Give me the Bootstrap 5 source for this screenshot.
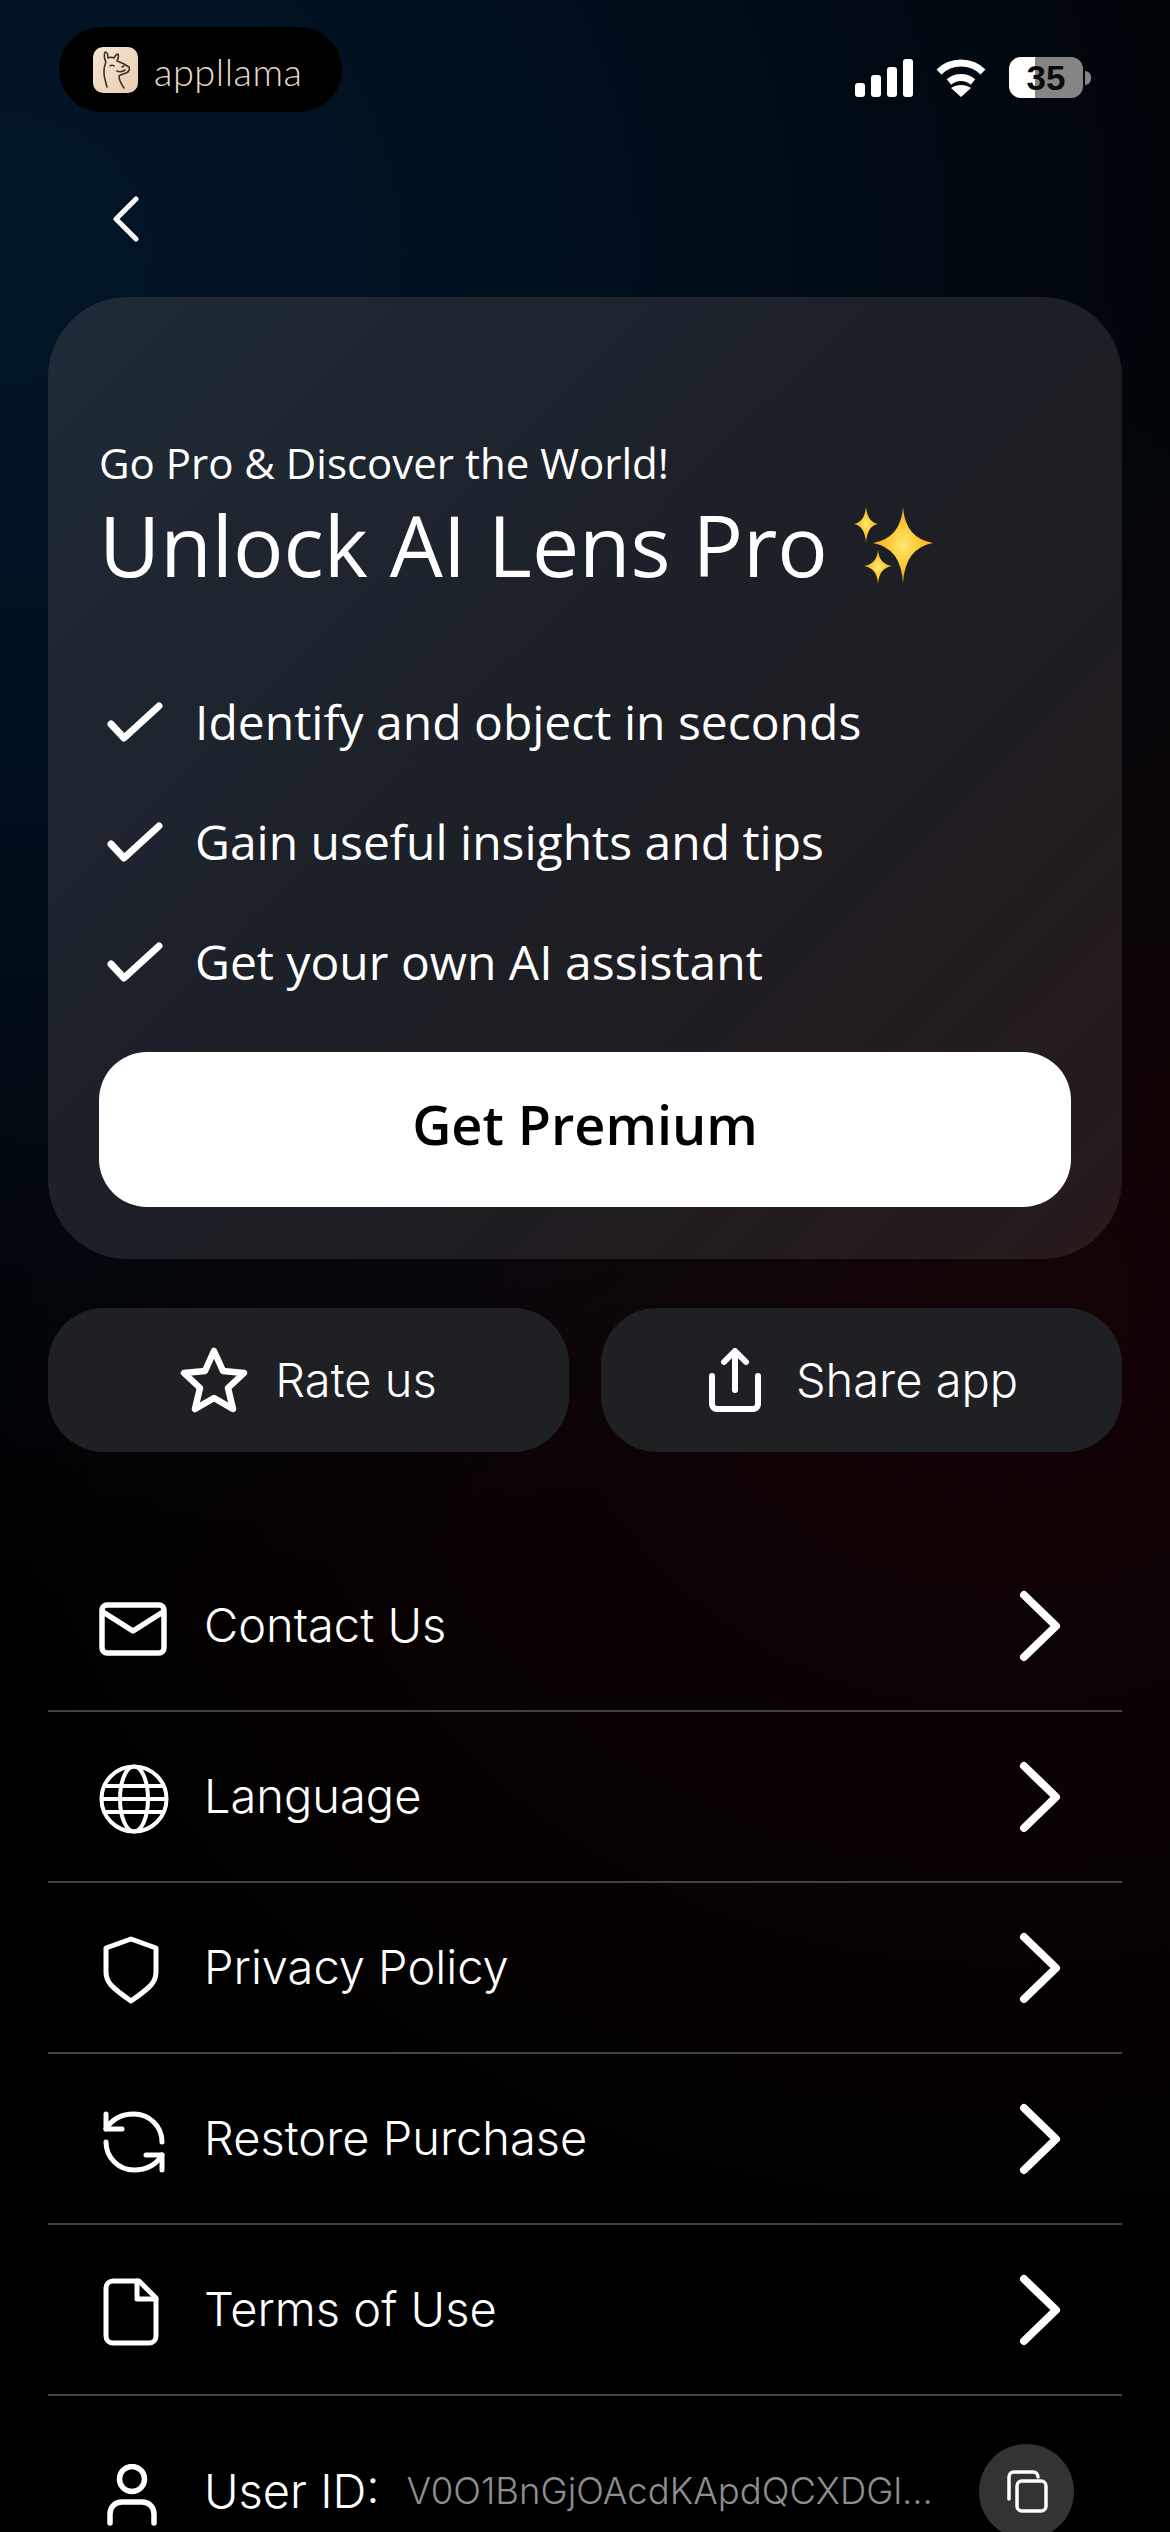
<!DOCTYPE html>
<html lang="en">
<head>
    <meta charset="UTF-8">
    <meta name="viewport" content="width=device-width, initial-scale=1.0">
    <title>Settings</title>
    <link href="https://cdn.jsdelivr.net/npm/bootstrap@5.3.0/dist/css/bootstrap.min.css" rel="stylesheet">
    <style>
        html, body {
            height: 2532px;
            overflow: hidden;
        }
        body {
            background-color: #000;
            background-image:
                radial-gradient(ellipse 1500px 1350px at 0 250px, #021629 0%, rgba(2,22,41,.7) 40%, rgba(2,22,41,0) 100%),
                radial-gradient(ellipse 1100px 1000px at 1000px 1300px, #140406 0%, rgba(20,4,6,.55) 50%, rgba(20,4,6,0) 100%);
            color: #fff;
            font-family: Inter, "Liberation Sans", sans-serif;
        }
        .status-row {
            height: 112px;
            margin-top: 27px;
            padding: 0 79px 0 59px;
        }
        .brand-pill {
            width: 283px;
            height: 85px;
            background: #000;
            border-radius: 43px;
            padding-left: 34px;
            gap: 16px;
        }
        .brand-icon {
            width: 45px;
            height: 46px;
            border-radius: 10px;
            background: linear-gradient(135deg, #f6e6d4, #e7cdb0);
            display: block;
        }
        .brand-name {
            font-family: Lato, sans-serif;
            font-weight: 300;
            font-size: 38px;
            letter-spacing: .5px;
            line-height: 46px;
            color: #ead9c6;
            margin-top: 2px;
        }
        .status-icons {
            gap: 23px;
            margin-top: 30px;
        }
        .battery-box {
            width: 74px;
            height: 41px;
            border-radius: 12px;
            overflow: hidden;
            background: linear-gradient(90deg, #fff 35%, #858585 35%);
            color: #0b0b0d;
            font-family: "Liberation Sans", sans-serif;
            font-weight: 700;
            font-size: 35px;
            line-height: 41px;
            text-align: center;
            margin-right: 8px;
        }
        .battery-wrap {
            position: relative;
        }
        .battery-tip {
            position: absolute;
            right: 0;
            top: 14px;
            width: 6px;
            height: 14px;
            background: #858585;
            border-radius: 0 7px 7px 0;
        }
        .back-row {
            padding-left: 111px;
            height: 158px;
            padding-top: 57px;
        }
        .pro-card {
            margin: 0 48px;
            height: 962px;
            border-radius: 80px;
            padding: 137px 51px 0;
            background: linear-gradient(135deg, #1f2b37 0%, #1c1f26 50%, #271a1b 100%);
        }
        .pro-sub {
            font-family: "Open Sans", sans-serif;
            font-size: 42px;
            line-height: 58px;
        }
        .pro-title {
            font-family: "Open Sans", sans-serif;
            font-weight: 400;
            font-size: 84px;
            line-height: 100px;
            margin: 3px 0 0;
            gap: 23px;
        }
        .pro-features {
            margin: 67px 0 0;
            padding: 0;
            list-style: none;
        }
        .pro-features li {
            height: 120px;
            font-family: "Open Sans", sans-serif;
            font-size: 48px;
            gap: 32px;
            padding-left: 8px;
        }
        .btn-premium {
            height: 155px;
            width: 100%;
            border-radius: 48px;
            background: #fff;
            color: #000;
            border: 0;
            padding: 0 0 10px;
            font-family: "Open Sans", sans-serif;
            font-weight: 600;
            font-size: 54px;
            margin-top: 30px;
        }
        .btn-premium:hover { background: #fff; color: #000; }
        .action-row {
            margin: 49px 48px 0;
            gap: 32px;
        }
        .btn-action {
            flex: none;
            width: calc(50% - 16px);
            height: 144px;
            border-radius: 56px;
            background: #1e2023;
            color: #fff;
            border: 0;
            font-size: 47px;
            font-weight: 350;
            gap: 27px;
        }
        .btn-action:hover { background: #1e2023; color: #fff; }
        .btn-share {
            gap: 35px;
            padding-left: 16px;
        }
        .menu-list {
            margin: 89px 48px 0;
        }
        .menu-list .list-group-item {
            background: transparent;
            color: #fff;
            border: 0;
            border-bottom: 2px solid #3f4347;
            border-radius: 0;
            height: 171px;
            padding: 0 61px 0 51px;
            font-size: 47px;
            font-weight: 350;
        }
        .menu-icon {
            width: 72px;
            margin-right: 33px;
            flex: none;
        }
        .menu-list .user-row {
            border-bottom: 0;
            padding-right: 48px;
            height: 190px;
        }
        .user-label {
            white-space: nowrap;
        }
        .user-value {
            font-size: 36.5px;
            color: #8e8e8e;
            margin-left: 27px;
            flex: 1 1 auto;
            white-space: nowrap;
        }
        .copy-btn {
            width: 95px;
            height: 95px;
            border-radius: 50%;
            background: #333;
            flex: none;
        }
    </style>
</head>
<body>

<!-- Status bar -->
<div class="status-row d-flex justify-content-between align-items-start">
    <div class="brand-pill d-flex align-items-center">
        <svg class="brand-icon" viewBox="0 0 45 46" fill="none" stroke="#3c3128" stroke-width="1.6" stroke-linecap="round" stroke-linejoin="round">
            <path d="M14 40c-1-5-3-8-3-14 0-5 1-9 2-11-2-3-2-8-1-10 2 0 3 3 3 6 2-1 4-1 6 0 1-2 3-4 4-4 1 2 0 5-1 7 3 1 5 2 7 3l5 3c1 2 0 5-3 6-3 1-6 2-7 3 0 5 3 9 5 12" />
            <path d="M17 19c1-1 3-1 4 0M29 20l2-1" />
            <path d="M24 24c2 1 5 1 8-1" />
        </svg>
        <span class="brand-name">appllama</span>
    </div>
    <div class="status-icons d-flex align-items-center">
        <svg width="58" height="38" viewBox="0 0 58 38" fill="#fff">
            <rect x="0" y="24" width="10" height="14" rx="3"/>
            <rect x="16" y="16" width="10" height="22" rx="3"/>
            <rect x="32" y="8" width="10" height="30" rx="3"/>
            <rect x="48" y="0" width="10" height="38" rx="3"/>
        </svg>
        <svg width="50" height="38" viewBox="0 0 50 38" fill="none" stroke="#fff" stroke-width="7">
            <path d="M3 13C15 1 35 1 47 13"/>
            <path d="M13 23c7-6 17-6 24 0"/>
            <path d="M25 38l-10-9c6-4 14-4 20 0z" fill="#fff" stroke="none"/>
        </svg>
        <div class="battery-wrap">
            <div class="battery-box">35</div>
            <div class="battery-tip"></div>
        </div>
    </div>
</div>

<!-- Back -->
<div class="back-row">
    <svg width="30" height="46" viewBox="0 0 30 46" fill="none" stroke="#fff" stroke-width="5" stroke-linecap="round" stroke-linejoin="round">
        <path d="M25 3 5 23l20 20"/>
    </svg>
</div>

<!-- Pro card -->
<div class="pro-card">
    <div class="pro-sub">Go Pro &amp; Discover the World!</div>
    <h1 class="pro-title d-flex align-items-center">Unlock AI Lens Pro
        <svg width="84" height="80" viewBox="0 0 84 80">
            <defs>
                <radialGradient id="spark">
                    <stop offset="0" stop-color="#ffe873"/>
                    <stop offset=".5" stop-color="#fdca35"/>
                    <stop offset="1" stop-color="#eea51c"/>
                </radialGradient>
            </defs>
            <g fill="url(#spark)">
                <path d="M52 2Q54 33 82 38Q54 43 52 78Q50 43 22 38Q50 33 52 2Z"/>
                <path d="M15 1Q16 17 27 19Q16 21 15 38Q14 21 3 19Q14 17 15 1Z"/>
                <path d="M27 45Q28 59 41 61Q28 63 27 79Q26 63 13 61Q26 59 27 45Z"/>
            </g>
        </svg>
    </h1>
    <ul class="pro-features">
        <li class="d-flex align-items-center">
            <svg width="56" height="40" viewBox="0 0 56 40" fill="none" stroke="#fff" stroke-width="7" stroke-linecap="round" stroke-linejoin="round"><path d="M4 22l13 14L52 4"/></svg>
            Identify and object in seconds
        </li>
        <li class="d-flex align-items-center">
            <svg width="56" height="40" viewBox="0 0 56 40" fill="none" stroke="#fff" stroke-width="7" stroke-linecap="round" stroke-linejoin="round"><path d="M4 22l13 14L52 4"/></svg>
            Gain useful insights and tips
        </li>
        <li class="d-flex align-items-center">
            <svg width="56" height="40" viewBox="0 0 56 40" fill="none" stroke="#fff" stroke-width="7" stroke-linecap="round" stroke-linejoin="round"><path d="M4 22l13 14L52 4"/></svg>
            Get your own AI assistant
        </li>
    </ul>
    <button class="btn btn-premium" type="button">Get Premium</button>
</div>

<!-- Rate / share -->
<div class="action-row d-flex">
    <button class="btn btn-action d-flex align-items-center justify-content-center" type="button">
        <svg width="68" height="66" viewBox="0 0 68 66" fill="none" stroke="#fff" stroke-width="6.5" stroke-linejoin="round"><path d="M34 4l9 20 21 2-16 15 5 21-19-11-19 11 5-21L4 26l21-2z"/></svg>
        Rate us
    </button>
    <button class="btn btn-action btn-share d-flex align-items-center justify-content-center" type="button">
        <svg width="52" height="64" viewBox="0 0 52 64" fill="none" stroke="#fff" stroke-width="6" stroke-linecap="round" stroke-linejoin="round"><path d="M26 42V4M15 14 26 3l11 11"/><path d="M3 28v28c0 3 2 5 5 5h36c3 0 5-2 5-5V28"/></svg>
        Share app
    </button>
</div>

<!-- Menu -->
<div class="list-group menu-list">
    <div class="list-group-item d-flex align-items-center">
        <span class="menu-icon"><svg width="68" height="54" viewBox="0 0 68 54" fill="none" stroke="#fff" stroke-width="5.5" stroke-linecap="round" stroke-linejoin="round"><rect x="3" y="3" width="62" height="48" rx="5"/><path d="M4 10l30 19 30-19"/></svg></span>
        <span class="flex-grow-1">Contact Us</span>
        <svg width="42" height="72" viewBox="0 0 42 72" fill="none" stroke="#fff" stroke-width="8" stroke-linecap="round" stroke-linejoin="round"><path d="M5 5l32 31L5 67"/></svg>
    </div>
    <div class="list-group-item d-flex align-items-center">
        <span class="menu-icon"><svg width="70" height="70" viewBox="0 0 70 70" fill="none" stroke="#fff" stroke-width="4"><circle cx="35" cy="35" r="32.5"/><ellipse cx="35" cy="35" rx="14" ry="32.5"/><path d="M6 22h58M6 48h58M2.5 35h65"/></svg></span>
        <span class="flex-grow-1">Language</span>
        <svg width="42" height="72" viewBox="0 0 42 72" fill="none" stroke="#fff" stroke-width="8" stroke-linecap="round" stroke-linejoin="round"><path d="M5 5l32 31L5 67"/></svg>
    </div>
    <div class="list-group-item d-flex align-items-center">
        <span class="menu-icon"><svg class="ms-1" width="56" height="68" viewBox="0 0 56 68" fill="none" stroke="#fff" stroke-width="5" stroke-linejoin="round"><path d="M28 3l25 9v24c0 10-5 15-25 29C8 51 3 46 3 36V12z"/></svg></span>
        <span class="flex-grow-1">Privacy Policy</span>
        <svg width="42" height="72" viewBox="0 0 42 72" fill="none" stroke="#fff" stroke-width="8" stroke-linecap="round" stroke-linejoin="round"><path d="M5 5l32 31L5 67"/></svg>
    </div>
    <div class="list-group-item d-flex align-items-center">
        <span class="menu-icon"><svg class="ms-1" width="62" height="62" viewBox="0 0 62 62" fill="none" stroke="#fff" stroke-width="5" stroke-linecap="round" stroke-linejoin="round"><path d="M3 3v15h16"/><path d="M3 18C9 8 18 3 31 3c15 0 28 12 28 28"/><path d="M59 59V44H43"/><path d="M59 44c-6 10-15 15-28 15C16 59 3 47 3 31"/></svg></span>
        <span class="flex-grow-1">Restore Purchase</span>
        <svg width="42" height="72" viewBox="0 0 42 72" fill="none" stroke="#fff" stroke-width="8" stroke-linecap="round" stroke-linejoin="round"><path d="M5 5l32 31L5 67"/></svg>
    </div>
    <div class="list-group-item d-flex align-items-center">
        <span class="menu-icon"><svg class="ms-1" width="56" height="68" viewBox="0 0 56 68" fill="none" stroke="#fff" stroke-width="5" stroke-linecap="round" stroke-linejoin="round"><path d="M36 3H10C6 3 3 6 3 10v48c0 4 3 7 7 7h36c4 0 7-3 7-7V20z"/><path d="M34 3v18h19" /></svg></span>
        <span class="flex-grow-1">Terms of Use</span>
        <svg width="42" height="72" viewBox="0 0 42 72" fill="none" stroke="#fff" stroke-width="8" stroke-linecap="round" stroke-linejoin="round"><path d="M5 5l32 31L5 67"/></svg>
    </div>
    <div class="list-group-item user-row d-flex align-items-center">
        <span class="menu-icon"><svg class="ms-2" width="50" height="62" viewBox="0 0 50 62" fill="none" stroke="#fff" stroke-width="5.5" stroke-linecap="round"><circle cx="25" cy="15" r="12.5"/><path d="M3 59V50c0-7 5-12 12-12h20c7 0 12 5 12 12v9"/></svg></span>
        <span class="user-label">User ID:</span>
        <span class="user-value">V0O1BnGjOAcdKApdQCXDGl...</span>
        <span class="copy-btn d-flex align-items-center justify-content-center">
            <svg width="44" height="44" viewBox="0 0 44 44" fill="none" stroke="#fff" stroke-width="3.5" stroke-linecap="round" stroke-linejoin="round"><rect x="12" y="12" width="29" height="30" rx="5"/><path d="M4 30V8c0-3 2-5 5-5h19c3 0 5 2 5 5"/></svg>
        </span>
    </div>
</div>

<script src="https://cdn.jsdelivr.net/npm/bootstrap@5.3.0/dist/js/bootstrap.bundle.min.js"></script>
</body>
</html>
